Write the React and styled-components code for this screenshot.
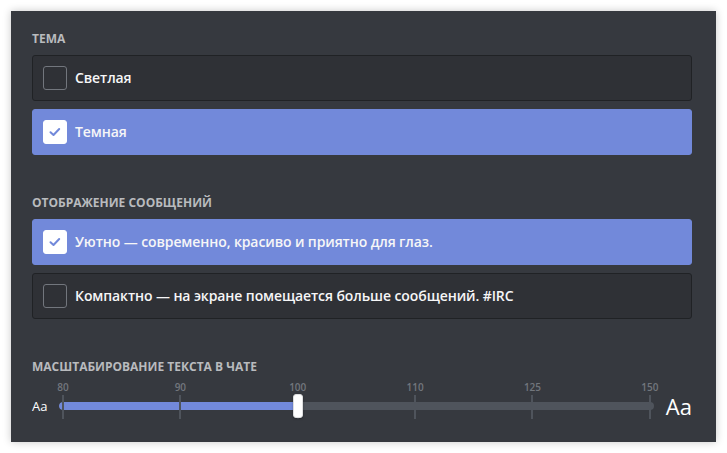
import React from 'react';
import styled, { createGlobalStyle } from 'styled-components';

const Global = createGlobalStyle`
  html, body {
    margin: 0;
    padding: 0;
    background: #ffffff;
  }
  body {
    font-family: "Open Sans", "Noto Sans", sans-serif;
  }
`;

const Page = styled.div`
  width: 727px;
  height: 453px;
  padding: 11px;
  box-sizing: border-box;
`;

const Panel = styled.div`
  width: 705px;
  height: 431px;
  box-sizing: border-box;
  background: #36393f;
  box-shadow: 0 0 8px rgba(0, 0, 0, 0.22);
  padding: 20px 24px 0 21px;
`;

const Section = styled.div`
  margin-bottom: 40px;
  &:last-child {
    margin-bottom: 0;
  }
`;

const Label = styled.h5`
  margin: 0 0 8px;
  font-size: 12px;
  line-height: 16px;
  font-weight: 700;
  text-transform: uppercase;
  color: #b9bbbe;
`;

const Options = styled.div`
  display: flex;
  flex-direction: column;
  gap: 8px;
`;

const Row = styled.div`
  height: 46px;
  box-sizing: border-box;
  display: flex;
  align-items: center;
  gap: 8px;
  padding: 0 10px;
  border-radius: 3px;
  border: 1px solid ${p => (p.$checked ? '#7289da' : '#202225')};
  background: ${p => (p.$checked ? '#7289da' : '#2f3136')};
  cursor: pointer;
`;

const Box = styled.div`
  width: 24px;
  height: 24px;
  box-sizing: border-box;
  border-radius: 3px;
  border: 1px solid ${p => (p.$checked ? '#ffffff' : '#72767d')};
  background: ${p => (p.$checked ? '#ffffff' : 'transparent')};
  display: flex;
  align-items: center;
  justify-content: center;
  flex-shrink: 0;
`;

const RowText = styled.span`
  font-size: 14px;
  line-height: 18px;
  font-weight: 600;
  letter-spacing: -0.1px;
  color: #f6f6f7;
`;

const Check = () => (
  <svg width="18" height="18" viewBox="0 0 18 18">
    <path d="M4.5 9.2 L7.5 12 L13.2 6" fill="none" stroke="#7289da" strokeWidth="2" strokeLinecap="round" strokeLinejoin="round" />
  </svg>
);

const Option = ({ checked, children }) => (
  <Row $checked={checked}>
    <Box $checked={checked}>{checked && <Check />}</Box>
    <RowText>{children}</RowText>
  </Row>
);

const SliderRow = styled.div`
  display: flex;
  align-items: center;
  height: 24px;
  margin-top: 19px;
`;

const SmallAa = styled.span`
  font-size: 13px;
  line-height: 24px;
  color: #ffffff;
  width: 27px;
  flex-shrink: 0;
`;

const BigAa = styled.span`
  font-size: 22px;
  line-height: 24px;
  color: #ffffff;
  margin-left: 12px;
  flex-shrink: 0;
`;

const Track = styled.div`
  position: relative;
  flex: 1;
  height: 24px;
  display: flex;
  align-items: center;
`;

const Bar = styled.div`
  width: 100%;
  height: 8px;
  border-radius: 4px;
  background: #4f545c;
  overflow: hidden;
`;

const Fill = styled.div`
  height: 100%;
  border-radius: 4px 0 0 4px;
  background: #7289da;
`;

const Marks = styled.div`
  position: absolute;
  left: 4px;
  right: 4px;
  top: 0;
  bottom: 0;
`;

const Mark = styled.div`
  position: absolute;
  top: 1px;
  width: 2px;
  height: 24px;
  margin-left: -1px;
  background: #4f545c;
`;

const MarkLabel = styled.span`
  position: absolute;
  top: -13px;
  transform: translateX(-50%);
  font-size: 10px;
  line-height: 12px;
  font-weight: 600;
  color: #72767d;
`;

const Knob = styled.div`
  position: absolute;
  top: 0;
  width: 10px;
  height: 24px;
  margin-left: -5px;
  box-sizing: border-box;
  border-radius: 3px;
  background: #ffffff;
  border: 1px solid #dcddde;
  box-shadow: 0 1px 2px rgba(0, 0, 0, 0.3);
`;

const marks = [80, 90, 100, 110, 125, 150];

const Slider = ({ value }) => {
  const index = marks.indexOf(value);
  const ratio = index / (marks.length - 1);
  return (
    <Track>
      <Bar>
        <Fill style={{ width: `calc(4px + (100% - 8px) * ${ratio})` }} />
      </Bar>
      <Marks>
        {marks.map((m, i) => {
          const left = `${(i / (marks.length - 1)) * 100}%`;
          return (
            <React.Fragment key={m}>
              <MarkLabel style={{ left }}>{m}</MarkLabel>
              <Mark style={{ left }} />
            </React.Fragment>
          );
        })}
        <Knob style={{ left: `${ratio * 100}%` }} />
      </Marks>
    </Track>
  );
};

export default function App() {
  return (
    <>
      <Global />
      <Page>
        <Panel>
          <Section>
            <Label>Тема</Label>
            <Options>
              <Option>Светлая</Option>
              <Option checked>Темная</Option>
            </Options>
          </Section>
          <Section>
            <Label>Отображение сообщений</Label>
            <Options>
              <Option checked>Уютно — современно, красиво и приятно для глаз.</Option>
              <Option>Компактно — на экране помещается больше сообщений. #IRC</Option>
            </Options>
          </Section>
          <Section>
            <Label>Масштабирование текста в чате</Label>
            <SliderRow>
              <SmallAa>Aa</SmallAa>
              <Slider value={100} />
              <BigAa>Aa</BigAa>
            </SliderRow>
          </Section>
        </Panel>
      </Page>
    </>
  );
}
